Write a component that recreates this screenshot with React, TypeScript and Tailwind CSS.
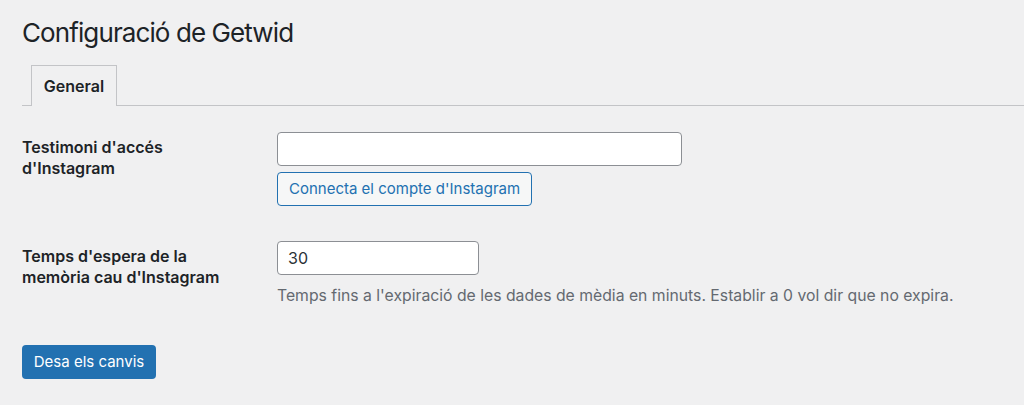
import React from "react";

const App = () => {
  return (
    <div className="min-h-[405px] bg-[#f0f0f1] pl-[22px] pt-[15px] font-['Inter',sans-serif] text-[#1d2327]">
      <h1 className="text-[26px] leading-[35px] font-normal tracking-[-0.9px]">
        Configuració de Getwid
      </h1>

      <div className="mt-[15px] flex border-b border-[#c3c4c7] pl-[9px]">
        <div className="-mb-px flex h-[41px] w-[86px] items-center justify-center border border-b-0 border-[#c3c4c7] bg-[#f0f0f1] text-[16px] font-semibold">
          General
        </div>
      </div>

      <div className="mt-[26px] flex">
        <div className="w-[255px] pt-[5px] text-[16px] font-semibold leading-[21px]">
          Testimoni d'accés
          <br />
          d'Instagram
        </div>
        <div className="flex flex-col items-start">
          <input
            type="text"
            className="h-[34px] w-[405px] rounded-[4px] border border-[#8c8f94] bg-white px-[10px] text-[16px]"
          />
          <button className="mt-[6px] h-[34px] rounded-[4px] border border-[#2271b1] bg-[#f6f7f7] px-[11px] text-[15px] text-[#2271b1]">
            Connecta el compte d'Instagram
          </button>
        </div>
      </div>

      <div className="mt-[35px] flex">
        <div className="w-[255px] pt-[5px] text-[16px] font-semibold leading-[21px]">
          Temps d'espera de la
          <br />
          memòria cau d'Instagram
        </div>
        <div className="flex flex-col items-start">
          <input
            type="text"
            defaultValue="30"
            className="h-[34px] w-[202px] rounded-[4px] border border-[#8c8f94] bg-white px-[10px] text-[16px] text-[#2c3338]"
          />
          <p className="mt-[10px] text-[15.75px] leading-[21px] text-[#646970]">
            Temps fins a l'expiració de les dades de mèdia en minuts. Establir a 0 vol dir que no expira.
          </p>
        </div>
      </div>

      <button className="mt-[39px] h-[34px] w-[134px] rounded-[4px] bg-[#2271b1] text-[15px] text-white">
        Desa els canvis
      </button>
    </div>
  );
};

export default App;
